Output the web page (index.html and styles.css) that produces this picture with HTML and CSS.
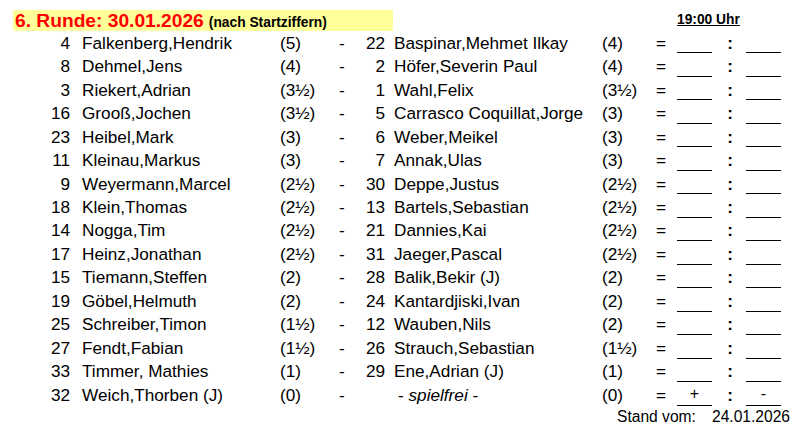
FILE: index.html
```html
<!DOCTYPE html>
<html lang="de">
<head>
<meta charset="utf-8">
<title>6. Runde</title>
<link rel="stylesheet" href="styles.css">
</head>
<body>
<div class="page">
  <div class="head">
    <div class="title"><span class="big">6. Runde: 30.01.2026</span> <span class="small">(nach Startziffern)</span></div>
    <div class="time">19:00 Uhr</div>
  </div>
  <div class="rows">
    <div class="row"><span class="n1">4</span><span class="p1">Falkenberg,Hendrik</span><span class="s1">(5)</span><span class="d">-</span><span class="n2">22</span><span class="p2">Baspinar,Mehmet Ilkay</span><span class="s2">(4)</span><span class="eq">=</span><span class="b"></span><span class="c">:</span><span class="b"></span></div>
    <div class="row"><span class="n1">8</span><span class="p1">Dehmel,Jens</span><span class="s1">(4)</span><span class="d">-</span><span class="n2">2</span><span class="p2">Höfer,Severin Paul</span><span class="s2">(4)</span><span class="eq">=</span><span class="b"></span><span class="c">:</span><span class="b"></span></div>
    <div class="row"><span class="n1">3</span><span class="p1">Riekert,Adrian</span><span class="s1">(3½)</span><span class="d">-</span><span class="n2">1</span><span class="p2">Wahl,Felix</span><span class="s2">(3½)</span><span class="eq">=</span><span class="b"></span><span class="c">:</span><span class="b"></span></div>
    <div class="row"><span class="n1">16</span><span class="p1">Grooß,Jochen</span><span class="s1">(3½)</span><span class="d">-</span><span class="n2">5</span><span class="p2">Carrasco Coquillat,Jorge</span><span class="s2">(3)</span><span class="eq">=</span><span class="b"></span><span class="c">:</span><span class="b"></span></div>
    <div class="row"><span class="n1">23</span><span class="p1">Heibel,Mark</span><span class="s1">(3)</span><span class="d">-</span><span class="n2">6</span><span class="p2">Weber,Meikel</span><span class="s2">(3)</span><span class="eq">=</span><span class="b"></span><span class="c">:</span><span class="b"></span></div>
    <div class="row"><span class="n1">11</span><span class="p1">Kleinau,Markus</span><span class="s1">(3)</span><span class="d">-</span><span class="n2">7</span><span class="p2">Annak,Ulas</span><span class="s2">(3)</span><span class="eq">=</span><span class="b"></span><span class="c">:</span><span class="b"></span></div>
    <div class="row"><span class="n1">9</span><span class="p1">Weyermann,Marcel</span><span class="s1">(2½)</span><span class="d">-</span><span class="n2">30</span><span class="p2">Deppe,Justus</span><span class="s2">(2½)</span><span class="eq">=</span><span class="b"></span><span class="c">:</span><span class="b"></span></div>
    <div class="row"><span class="n1">18</span><span class="p1">Klein,Thomas</span><span class="s1">(2½)</span><span class="d">-</span><span class="n2">13</span><span class="p2">Bartels,Sebastian</span><span class="s2">(2½)</span><span class="eq">=</span><span class="b"></span><span class="c">:</span><span class="b"></span></div>
    <div class="row"><span class="n1">14</span><span class="p1">Nogga,Tim</span><span class="s1">(2½)</span><span class="d">-</span><span class="n2">21</span><span class="p2">Dannies,Kai</span><span class="s2">(2½)</span><span class="eq">=</span><span class="b"></span><span class="c">:</span><span class="b"></span></div>
    <div class="row"><span class="n1">17</span><span class="p1">Heinz,Jonathan</span><span class="s1">(2½)</span><span class="d">-</span><span class="n2">31</span><span class="p2">Jaeger,Pascal</span><span class="s2">(2½)</span><span class="eq">=</span><span class="b"></span><span class="c">:</span><span class="b"></span></div>
    <div class="row"><span class="n1">15</span><span class="p1">Tiemann,Steffen</span><span class="s1">(2)</span><span class="d">-</span><span class="n2">28</span><span class="p2">Balik,Bekir (J)</span><span class="s2">(2)</span><span class="eq">=</span><span class="b"></span><span class="c">:</span><span class="b"></span></div>
    <div class="row"><span class="n1">19</span><span class="p1">Göbel,Helmuth</span><span class="s1">(2)</span><span class="d">-</span><span class="n2">24</span><span class="p2">Kantardjiski,Ivan</span><span class="s2">(2)</span><span class="eq">=</span><span class="b"></span><span class="c">:</span><span class="b"></span></div>
    <div class="row"><span class="n1">25</span><span class="p1">Schreiber,Timon</span><span class="s1">(1½)</span><span class="d">-</span><span class="n2">12</span><span class="p2">Wauben,Nils</span><span class="s2">(2)</span><span class="eq">=</span><span class="b"></span><span class="c">:</span><span class="b"></span></div>
    <div class="row"><span class="n1">27</span><span class="p1">Fendt,Fabian</span><span class="s1">(1½)</span><span class="d">-</span><span class="n2">26</span><span class="p2">Strauch,Sebastian</span><span class="s2">(1½)</span><span class="eq">=</span><span class="b"></span><span class="c">:</span><span class="b"></span></div>
    <div class="row"><span class="n1">33</span><span class="p1">Timmer, Mathies</span><span class="s1">(1)</span><span class="d">-</span><span class="n2">29</span><span class="p2">Ene,Adrian (J)</span><span class="s2">(1)</span><span class="eq">=</span><span class="b"></span><span class="c">:</span><span class="b"></span></div>
    <div class="row"><span class="n1">32</span><span class="p1">Weich,Thorben (J)</span><span class="s1">(0)</span><span class="d">-</span><span class="n2"></span><span class="p2 free">- <i>spielfrei</i> -</span><span class="s2">(0)</span><span class="eq">=</span><span class="b">+</span><span class="c">:</span><span class="b">-</span></div>
  </div>
  <div class="stand"><span class="stand-label">Stand vom:</span><span class="stand-date">24.01.2026</span></div>
</div>
</body>
</html>
```
FILE: styles.css
```css
* { box-sizing: border-box; }
html, body { margin: 0; padding: 0; background: #fff; }
body {
  font-family: "Liberation Sans", Arial, sans-serif;
  color: #000;
}
.page {
  width: 810px;
  height: 429px;
  padding-top: 9px;
}
.head {
  display: flex;
  align-items: center;
  height: 22px;
}
.title {
  margin-left: 13px;
  width: 380px;
  height: 21px;
  background: #ffff99;
  padding-left: 2px;
  white-space: nowrap;
  display: flex;
  align-items: baseline;
  line-height: 21px;
}
.big {
  color: #ff0000;
  font-weight: bold;
  font-size: 19.2px;
}
.small {
  font-weight: bold;
  font-size: 13.8px;
  margin-left: 5px;
}
.time {
  margin-left: 284px;
  font-weight: bold;
  font-size: 13.8px;
  text-decoration: underline;
  margin-top: -2px;
}
.rows {
  display: flex;
  flex-direction: column;
}
.row {
  display: grid;
  grid-template-columns: 70px 210px 59px 21px 25px 217px 54px 21px 35px 34px 35px;
  height: 23.47px;
  align-items: center;
  font-size: 17.2px;
  line-height: 20px;
  white-space: nowrap;
}
.n1, .n2 { text-align: right; }
.p1 { padding-left: 12px; }
.p2 { padding-left: 9px; }
.free { padding-left: 13px; }
.eq { text-align: left; }
.b {
  align-self: stretch;
  border-bottom: 1px solid #000;
  margin-bottom: 1px;
  text-align: center;
  display: flex;
  align-items: center;
  justify-content: center;
  font-size: 16px;
}
.c {
  text-align: center;
  font-weight: bold;
  padding-left: 2px;
}
.stand {
  display: flex;
  font-size: 15.6px;
  padding-left: 617px;
  height: 20px;
  align-items: center;
  line-height: 20px;
}
.stand-label { width: 95px; }
```
